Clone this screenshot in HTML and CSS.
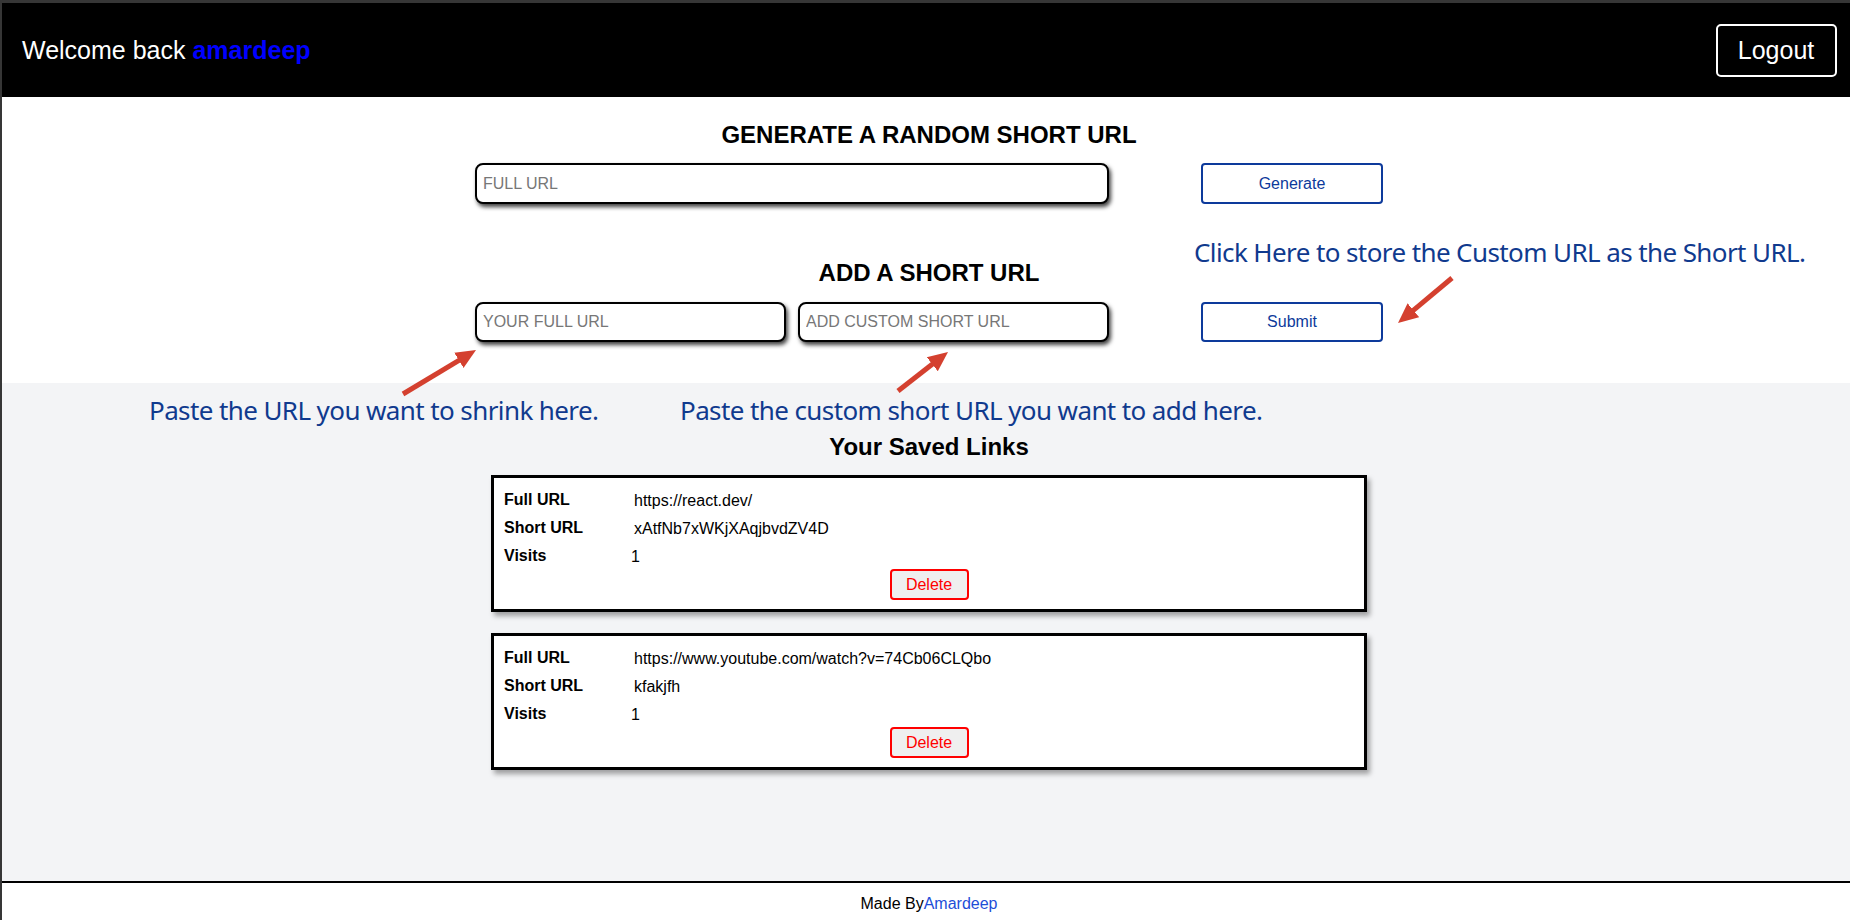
FILE: index.html
```html
<!DOCTYPE html>
<html lang="en">
<head>
<meta charset="utf-8">
<title>URL Shortener</title>
<link rel="stylesheet" href="styles.css">
</head>
<body>
<header class="topbar">
  <div class="welcome">Welcome back <span class="user">amardeep</span></div>
  <button class="logout">Logout</button>
</header>

<section class="creator">
  <h2 class="title">GENERATE A RANDOM SHORT URL</h2>
  <div class="form-row row-first">
    <div class="fields">
      <input class="field field-wide" type="text" placeholder="FULL URL">
    </div>
    <button class="action">Generate</button>
  </div>

  <h2 class="title title-second">ADD A SHORT URL</h2>
  <div class="form-row row-second">
    <div class="fields fields-split">
      <input class="field field-half" type="text" placeholder="YOUR FULL URL">
      <input class="field field-half" type="text" placeholder="ADD CUSTOM SHORT URL">
    </div>
    <button class="action">Submit</button>
  </div>
</section>

<section class="saved">
  <h2 class="title">Your Saved Links</h2>
  <div class="cards">
    <div class="card">
      <div class="info">
        <div class="label">Full URL</div><div class="value">https://react.dev/</div>
        <div class="label">Short URL</div><div class="value">xAtfNb7xWKjXAqjbvdZV4D</div>
        <div class="label">Visits</div><div class="value visits">1</div>
      </div>
      <div class="card-actions"><button class="delete">Delete</button></div>
    </div>
    <div class="card">
      <div class="info">
        <div class="label">Full URL</div><div class="value">https://www.youtube.com/watch?v=74Cb06CLQbo</div>
        <div class="label">Short URL</div><div class="value">kfakjfh</div>
        <div class="label">Visits</div><div class="value visits">1</div>
      </div>
      <div class="card-actions"><button class="delete">Delete</button></div>
    </div>
  </div>
</section>

<footer class="footer">Made By<a class="author" href="#">Amardeep</a></footer>

<div class="note note-click">Click Here to store the Custom URL as the Short URL.</div>
<div class="note note-full">Paste the URL you want to shrink here.</div>
<div class="note note-custom">Paste the custom short URL you want to add here.</div>

<svg class="arrows" width="1850" height="920" viewBox="0 0 1850 920" xmlns="http://www.w3.org/2000/svg">
  <defs>
    <marker id="ah" markerWidth="20" markerHeight="20" refX="4" refY="10" orient="auto" markerUnits="userSpaceOnUse">
      <path d="M0,1 L20,10 L0,19 Z" fill="#d4402f"/>
    </marker>
  </defs>
  <line x1="401" y1="391" x2="460.3" y2="355.3" stroke="#d4402f" stroke-width="5" marker-end="url(#ah)"/>
  <line x1="896" y1="388" x2="933.4" y2="358.8" stroke="#d4402f" stroke-width="5" marker-end="url(#ah)"/>
  <line x1="1450" y1="275" x2="1408.3" y2="309.8" stroke="#d4402f" stroke-width="5" marker-end="url(#ah)"/>
</svg>
</body>
</html>
```

FILE: styles.css
```css
* { box-sizing: border-box; }

html, body { height: 100%; }

body {
  margin: 0;
  height: 920px;
  border-top: 3px solid #363636;
  border-left: 2px solid #363636;
  font-family: "Liberation Sans", Arial, sans-serif;
  color: #000;
  background: #fff;
  display: flex;
  flex-direction: column;
  position: relative;
  overflow: hidden;
}

.topbar {
  height: 94px;
  flex: none;
  background: #000;
  display: flex;
  align-items: center;
  justify-content: space-between;
  padding: 0 13px 0 20px;
}

.welcome {
  color: #fff;
  font-size: 25px;
  line-height: 29px;
}

.user {
  color: #0000ff;
  font-weight: bold;
}

.logout {
  font-family: inherit;
  font-size: 25px;
  line-height: 29px;
  color: #fff;
  background: #000;
  border: 2px solid #fff;
  border-radius: 5px;
  padding: 10px 20px 10px 19px;
  width: 121px;
  height: 53px;
}

.creator {
  flex: none;
  background: #fff;
  padding: 24px 0 41px 6px;
  display: flex;
  flex-direction: column;
  align-items: center;
}

.title {
  margin: 0;
  font-size: 24px;
  line-height: 28px;
  font-weight: bold;
  text-align: center;
}

.title-second { margin-top: 55px; }

.form-row {
  display: flex;
  align-items: center;
  gap: 92px;
}

.row-first { margin-top: 14px; height: 41px; }
.row-second { margin-top: 15px; height: 40px; }

.fields { display: flex; gap: 12px; width: 634px; }

.field {
  height: 100%;
  border: 2px solid #000;
  border-radius: 8px;
  box-shadow: 2px 3px 4px rgba(0, 0, 0, 0.75);
  font-family: inherit;
  font-size: 16px;
  padding: 0 6px;
  background: #fff;
  outline: none;
}

.row-first .field { height: 41px; }
.row-second .field { height: 40px; }

.field::placeholder { color: #777; }

.field-wide { width: 634px; }
.field-half { width: 311px; }

.action {
  width: 182px;
  height: 100%;
  background: #fff;
  border: 2px solid #0d3a9b;
  border-radius: 4px;
  color: #0d3a9b;
  font-family: inherit;
  font-size: 16px;
}

.saved {
  flex: 1;
  background: #f3f4f6;
  padding: 50px 0 0 6px;
  display: flex;
  flex-direction: column;
  align-items: center;
}

.cards {
  margin-top: 14px;
  display: flex;
  flex-direction: column;
  gap: 21px;
}

.card {
  width: 876px;
  height: 137px;
  background: #fff;
  border: 3px solid #000;
  box-shadow: 3px 4px 5px rgba(0, 0, 0, 0.35);
  padding: 7px 10px 9px 10px;
}

.info {
  display: grid;
  grid-template-columns: 130px 1fr;
  grid-auto-rows: 28px;
  align-items: center;
  font-size: 16px;
  padding-top: 2px;
}

.label {
  font-weight: bold;
  margin-top: -3px;
}

.visits { margin-left: -3px; }

.card-actions {
  display: flex;
  justify-content: center;
  margin-top: -2px;
}

.delete {
  height: 31px;
  width: 79px;
  background: #efefef;
  border: 2px solid #ff0000;
  border-radius: 4px;
  color: #ff0000;
  font-family: inherit;
  font-size: 16px;
  padding: 0;
}

.footer {
  flex: none;
  height: 39px;
  border-top: 2px solid #000;
  background: #fff;
  text-align: center;
  font-size: 16px;
  line-height: 18px;
  padding: 12px 0 0 6px;
}

.author {
  color: #1d4ed8;
  text-decoration: none;
}

.note {
  position: absolute;
  color: #103a8e;
  font-family: "Noto Sans", "Open Sans", sans-serif;
  font-size: 26px;
  letter-spacing: -0.6px;
  line-height: 34px;
  white-space: nowrap;
}

.note-click { left: 1192px; top: 232px; }
.note-full { left: 147px; top: 390px; }
.note-custom { left: 678px; top: 390px; }

.arrows {
  position: absolute;
  left: 0;
  top: 0;
  pointer-events: none;
}
```
